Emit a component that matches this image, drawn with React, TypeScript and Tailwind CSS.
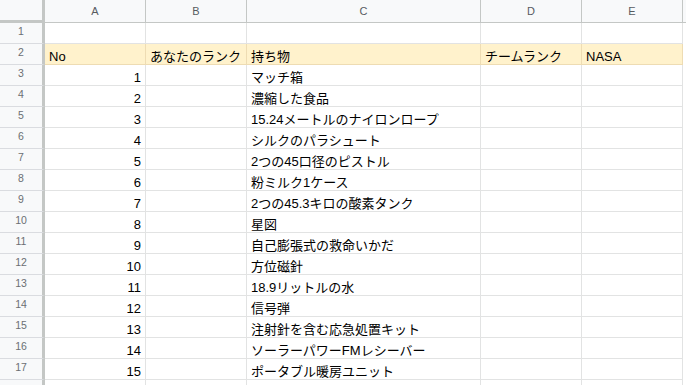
const items = [
  "マッチ箱",
  "濃縮した食品",
  "15.24メートルのナイロンロープ",
  "シルクのパラシュート",
  "2つの45口径のピストル",
  "粉ミルク1ケース",
  "2つの45.3キロの酸素タンク",
  "星図",
  "自己膨張式の救命いかだ",
  "方位磁針",
  "18.9リットルの水",
  "信号弾",
  "注射針を含む応急処置キット",
  "ソーラーパワーFMレシーバー",
  "ポータブル暖房ユニット",
];

const cols = [
  { key: "A", w: "w-[101px]" },
  { key: "B", w: "w-[101px]" },
  { key: "C", w: "w-[234px]" },
  { key: "D", w: "w-[101px]" },
  { key: "E", w: "w-[101px]" },
];

const font = { fontFamily: '"Liberation Sans", Arial, "Noto Sans CJK JP", sans-serif' };

const RowNum = ({ n }: { n?: number }) => (
  <div className="flex h-[21px] w-[45px] shrink-0 items-center justify-center border-r-[3px] border-b border-r-[#c4c7c5] border-b-[#dadce0] bg-[#f8f9fa] pb-[3px] text-[10.5px] text-[#6b6f73]">
    {n}
  </div>
);

const Cell = ({
  w,
  children,
  right,
  yellow,
}: {
  w: string;
  children?: React.ReactNode;
  right?: boolean;
  yellow?: boolean;
}) => (
  <div
    className={`flex h-[21px] shrink-0 items-end overflow-hidden whitespace-nowrap border-r border-b px-[4px] pb-[1px] text-[13px] leading-[13px] text-black ${w} ${
      right ? "justify-end" : "justify-start"
    } ${yellow ? "border-[#eedcb3] bg-[#fff2cc]" : "border-[#e2e3e3] bg-white"}`}
  >
    {children}
  </div>
);

export default function App() {
  const rows: { no?: number; item?: string }[] = items.map((t, i) => ({ no: i + 1, item: t }));
  return (
    <div className="h-[385px] w-[686px] overflow-hidden bg-white" style={font}>
      <div className="flex">
        <div className="h-[23px] w-[45px] shrink-0 border-r-[3px] border-b-[3px] border-[#c4c7c5] bg-[#f8f9fa]" />
        {cols.map((c) => (
          <div
            key={c.key}
            className={`flex h-[23px] shrink-0 items-center justify-center border-r border-b border-[#c4c7c5] bg-[#f8f9fa] pt-[1px] text-[11px] text-[#575b5f] ${c.w}`}
          >
            {c.key}
          </div>
        ))}
        <div className="h-[23px] flex-1 border-b border-[#c4c7c5] bg-[#f8f9fa]" />
      </div>

      <div className="flex">
        <RowNum n={1} />
        {cols.map((c) => (
          <Cell key={c.key} w={c.w} />
        ))}
      </div>

      <div className="flex">
        <RowNum n={2} />
        <Cell w={cols[0].w} yellow>No</Cell>
        <Cell w={cols[1].w} yellow>あなたのランク</Cell>
        <Cell w={cols[2].w} yellow>持ち物</Cell>
        <Cell w={cols[3].w} yellow>チームランク</Cell>
        <Cell w={cols[4].w} yellow>NASA</Cell>
      </div>

      {rows.map((r, i) => (
        <div key={i} className="flex">
          <RowNum n={i + 3} />
          <Cell w={cols[0].w} right>{r.no}</Cell>
          <Cell w={cols[1].w} />
          <Cell w={cols[2].w}>{r.item}</Cell>
          <Cell w={cols[3].w} />
          <Cell w={cols[4].w} />
        </div>
      ))}

      <div className="flex">
        <RowNum />
        {cols.map((c) => (
          <Cell key={c.key} w={c.w} />
        ))}
      </div>
    </div>
  );
}
